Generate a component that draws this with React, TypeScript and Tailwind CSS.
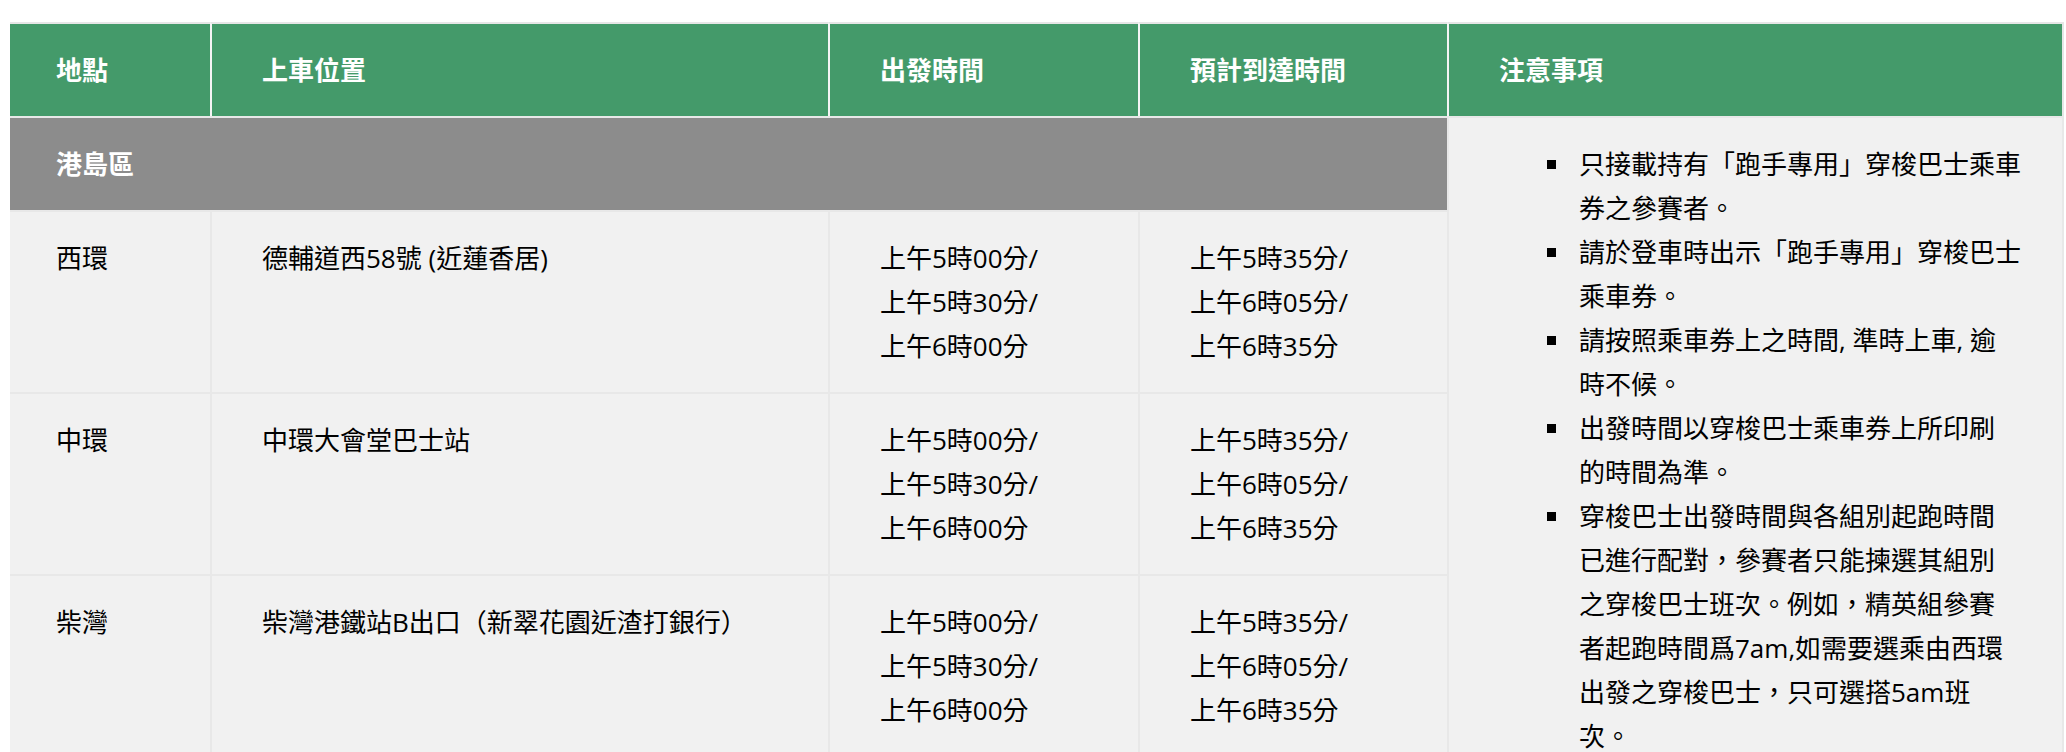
const FONT = { fontFamily: '"Open Sans", "Noto Sans CJK TC", sans-serif' };

const departTimes = ["上午5時00分/", "上午5時30分/", "上午6時00分"];
const arriveTimes = ["上午5時35分/", "上午6時05分/", "上午6時35分"];

const stops = [
  { place: "西環", pickup: "德輔道西58號 (近蓮香居)" },
  { place: "中環", pickup: "中環大會堂巴士站" },
  { place: "柴灣", pickup: "柴灣港鐵站B出口（新翠花園近渣打銀行）" },
];

// each note is split into the lines the original wraps at
const notes = [
  ["只接載持有「跑手專用」穿梭巴士乘車", "券之參賽者。"],
  ["請於登車時出示「跑手專用」穿梭巴士", "乘車券。"],
  ["請按照乘車券上之時間, 準時上車, 逾", "時不候。"],
  ["出發時間以穿梭巴士乘車券上所印刷", "的時間為準。"],
  [
    "穿梭巴士出發時間與各組別起跑時間",
    "已進行配對，參賽者只能揀選其組別",
    "之穿梭巴士班次。例如，精英組參賽",
    "者起跑時間爲7am,如需要選乘由西環",
    "出發之穿梭巴士，只可選搭5am班",
    "次。",
  ],
];

const headers = ["地點", "上車位置", "出發時間", "預計到達時間", "注意事項"];

function Lines({ lines }: { lines: string[] }) {
  return (
    <>
      {lines.map((l) => (
        <div key={l} className="whitespace-nowrap">
          {l}
        </div>
      ))}
    </>
  );
}

export default function App() {
  return (
    <div className="min-h-screen bg-white pt-[22px] pl-[10px]" style={FONT}>
      <div className="grid w-fit grid-cols-[200px_618px_310px_309px_617px] grid-rows-[auto_auto_auto_auto_1fr] text-[26px] leading-[44px] text-black">
        {headers.map((h, i) => (
          <div
            key={h}
            className={
              "bg-[#449a6a] py-[24px] font-bold text-white border-t-2 border-t-[#e6e6e6] " +
              (i === 0 ? "pl-[46px]" : "pl-[50px] border-l-2 border-l-[#f4f4f4]") +
              (i === 4 ? " border-r-2 border-r-[#e6e6e6]" : "")
            }
          >
            {h}
          </div>
        ))}

        <div className="col-span-4 bg-[#8c8c8c] py-[24px] pl-[46px] font-bold text-white border-t-2 border-t-[#e8e8e8]">
          港島區
        </div>

        <div className="col-start-5 row-start-2 row-span-4 bg-[#f1f1f1] border-t-2 border-l-2 border-r-2 border-[#e8e8e8] py-[24px] pl-[50px]">
          <ul className="ml-[48px]">
            {notes.map((n, i) => (
              <li key={i} className="flex items-start">
                <span className="flex h-[44px] w-[32px] shrink-0 items-center">
                  <span className="block h-[9px] w-[9px] bg-black" />
                </span>
                <div>
                  <Lines lines={n} />
                </div>
              </li>
            ))}
          </ul>
        </div>

        {stops.map((s) => (
          <div key={s.place} className="contents">
            <div className="bg-[#f1f1f1] border-t-2 border-[#e8e8e8] py-[24px] pl-[46px]">{s.place}</div>
            <div className="bg-[#f1f1f1] border-t-2 border-l-2 border-[#e8e8e8] py-[24px] pl-[50px] whitespace-nowrap">
              {s.pickup}
            </div>
            <div className="bg-[#f1f1f1] border-t-2 border-l-2 border-[#e8e8e8] py-[24px] pl-[50px]">
              <Lines lines={departTimes} />
            </div>
            <div className="bg-[#f1f1f1] border-t-2 border-l-2 border-[#e8e8e8] py-[24px] pl-[50px]">
              <Lines lines={arriveTimes} />
            </div>
          </div>
        ))}
      </div>
    </div>
  );
}
